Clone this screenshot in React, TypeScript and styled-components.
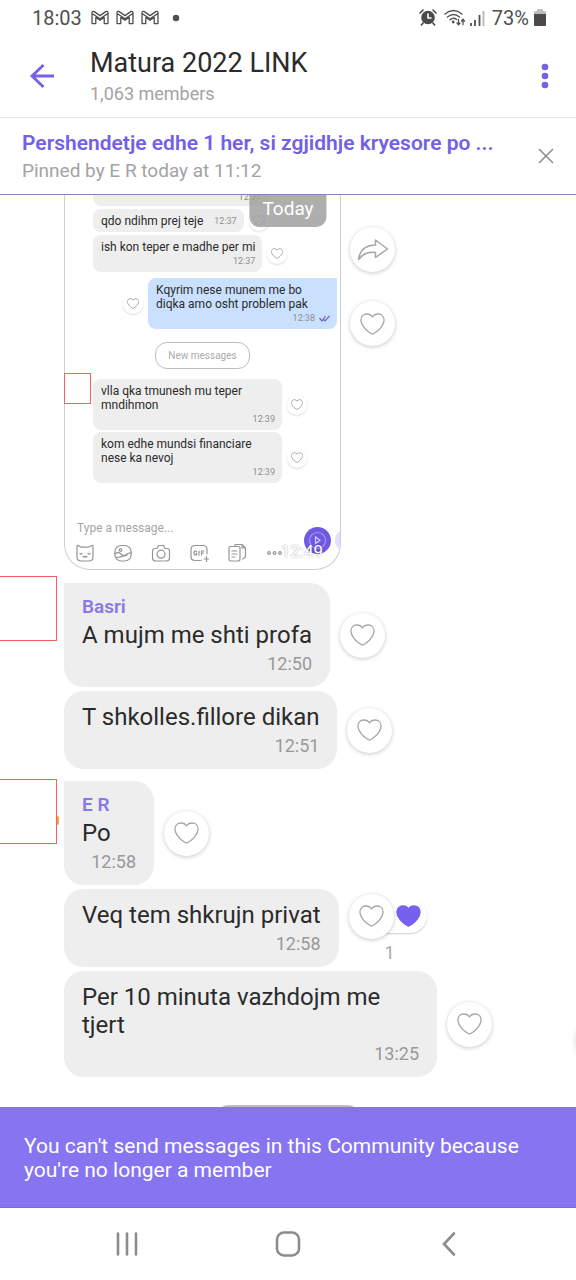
import React from "react";
import styled, { createGlobalStyle } from "styled-components";

const GlobalStyle = createGlobalStyle`
  *, *::before, *::after { box-sizing: border-box; }
  body { margin: 0; background: #fff; font-family: Roboto, "Liberation Sans", sans-serif; color: #2b2b2b; }
  button { font: inherit; color: inherit; border: 0; padding: 0; background: none; cursor: pointer; }
  svg { display: block; flex: none; }
  h1, p { margin: 0; font-weight: 400; }
`;

const Page = styled.div`
  display: flex;
  flex-direction: column;
  height: 100vh;
  overflow: hidden;
`;

const StatusBar = styled.div`
  display: flex;
  justify-content: space-between;
  align-items: center;
  height: 35px;
  padding: 0 30px 0 32px;
  font-size: 20px;
  color: #505050;
`;

const StatusGroup = styled.div<{ $gap: number }>`
  display: flex;
  align-items: center;
  gap: ${(p) => p.$gap}px;
`;

const Header = styled.header`
  display: flex;
  align-items: center;
  height: 83px;
  padding: 0 24px 0 28px;
  border-bottom: 1px solid #e6e6e6;
`;

const IconButton = styled.button`
  display: flex;
  align-items: center;
  justify-content: center;
`;

const HeaderText = styled.div`
  flex: 1;
  padding-left: 34px;
`;

const Title = styled.h1`
  font-size: 27px;
  line-height: 34px;
`;

const Muted = styled.p<{ $size: number }>`
  margin-top: 2px;
  font-size: ${(p) => p.$size}px;
  line-height: 24px;
  color: #a3a3a3;
`;

const PinnedBar = styled.section`
  display: flex;
  align-items: center;
  justify-content: space-between;
  height: 77px;
  padding: 0 22px;
  border-bottom: 1px solid #8781bd;
`;

const PinnedTitle = styled.p`
  font-size: 21px;
  line-height: 28px;
  font-weight: 600;
  color: #7360e4;
`;

const Chat = styled.main`
  position: relative;
  flex: 1;
  min-height: 0;
  overflow: hidden;
`;

const DateBadge = styled.div`
  position: absolute;
  top: 0;
  left: 50%;
  transform: translateX(-50%);
  padding: 0 13px 4px;
  border-radius: 0 0 10px 10px;
  background: rgba(160, 160, 160, 0.85);
  color: #fff;
  font-size: 19px;
  line-height: 28px;
`;

const PhotoRow = styled.div`
  display: flex;
  align-items: flex-start;
  gap: 9px;
  padding-left: 64px;
`;

const PhotoFrame = styled.div`
  position: relative;
`;

const Photo = styled.div`
  position: relative;
  display: flex;
  flex-direction: column;
  align-items: flex-start;
  width: 277px;
  height: 375px;
  border: 1px solid #cfcfcf;
  border-top: 0;
  border-radius: 0 0 26px 26px;
  overflow: hidden;
`;

const MiniRow = styled.div<{ $top: number; $end?: boolean }>`
  display: flex;
  align-items: center;
  gap: 5px;
  margin-top: ${(p) => p.$top}px;
  padding: 0 3px 0 28px;
  align-self: ${(p) => (p.$end ? "flex-end" : "flex-start")};
`;

const MiniBubble = styled.div<{ $own?: boolean; $width?: number; $inline?: boolean }>`
  display: flex;
  flex-direction: ${(p) => (p.$inline ? "row" : "column")};
  align-items: ${(p) => (p.$inline ? "center" : "stretch")};
  gap: ${(p) => (p.$inline ? 11 : 0)}px;
  width: ${(p) => (p.$width ? `${p.$width}px` : "auto")};
  padding: 5px 7px 4px 8px;
  border-radius: ${(p) => (p.$own ? "8px 0 8px 8px" : "8px")};
  background: ${(p) => (p.$own ? "#c9e0fe" : "#eeeeee")};
  font-size: 12px;
  line-height: 14px;
`;

const CutBubble = styled.div`
  width: 175px;
  height: 11px;
  padding-right: 7px;
  border-radius: 0 0 8px 8px;
  background: #eeeeee;
`;

const MiniTime = styled.span<{ $lift?: boolean }>`
  display: flex;
  justify-content: flex-end;
  align-items: center;
  gap: 4px;
  margin-top: ${(p) => (p.$lift ? -5 : 0)}px;
  font-size: 9px;
  line-height: 14px;
  color: #8f8f8f;
`;

const NewMessages = styled.div`
  align-self: center;
  margin-top: 13px;
  padding: 0 12px;
  border: 1px solid #bdbdbd;
  border-radius: 12px;
  font-size: 10px;
  line-height: 25px;
  color: #ababab;
`;

const AvatarMark = styled.div`
  position: absolute;
  left: 0;
  top: 178px;
  width: 27px;
  height: 31px;
  border: 1px solid #f4605f;
  background: #fff;
`;

const Composer = styled.input`
  width: 160px;
  margin: 37px 0 0 12px;
  padding: 0;
  border: 0;
  outline: 0;
  background: none;
  font: 12px/16px Roboto, "Liberation Sans", sans-serif;
  &::placeholder { color: #a5a5a5; opacity: 1; }
`;

const Tools = styled.div`
  display: flex;
  gap: 18px;
  margin: 7px 0 0 10px;
`;

const VoiceButton = styled.div`
  position: absolute;
  right: 9px;
  bottom: 15px;
`;

const PhotoEdge = styled.div`
  position: absolute;
  right: -18px;
  bottom: 17px;
  width: 23px;
  height: 23px;
  border-radius: 50%;
  background: #e3dffa;
`;

const PhotoTime = styled.span`
  position: absolute;
  right: 17px;
  bottom: 7px;
  font-size: 17px;
  line-height: 22px;
  color: #fff;
  text-shadow: 0 0 2px rgba(0, 0, 0, 0.4);
`;

const SideActions = styled.div`
  display: flex;
  flex-direction: column;
  gap: 29px;
  padding-top: 32px;
`;

const RoundButton = styled.button<{ $small?: boolean }>`
  position: relative;
  display: flex;
  align-items: center;
  justify-content: center;
  flex: none;
  width: ${(p) => (p.$small ? 20 : 45)}px;
  height: ${(p) => (p.$small ? 20 : 45)}px;
  border-radius: 50%;
  background: #fff;
  box-shadow: ${(p) => (p.$small ? "0 1px 2px rgba(0,0,0,.14)" : "0 1px 4px rgba(0,0,0,.22)")};
`;

const Group = styled.section<{ $gapTop: number; $inset: number }>`
  display: flex;
  align-items: flex-start;
  gap: 7px;
  margin-top: ${(p) => p.$gapTop}px;
  > ul { padding-top: ${(p) => p.$inset}px; }
`;

const Avatar = styled.div`
  position: relative;
  flex: none;
  width: 57px;
  height: 65px;
  border: 1px solid #f4605f;
  border-left: 0;
  background: #fff;
`;

const AvatarDot = styled.span`
  position: absolute;
  right: -3px;
  top: 36px;
  width: 2px;
  height: 9px;
  border-radius: 0 2px 2px 0;
  background: #f7a233;
`;

const Messages = styled.ul`
  display: flex;
  flex-direction: column;
  gap: 4px;
  flex: 1;
  margin: 0;
  padding: 0;
  list-style: none;
`;

const MessageRow = styled.li`
  display: flex;
  align-items: center;
  gap: 10px;
`;

const Bubble = styled.article<{ $first?: boolean }>`
  max-width: 373px;
  padding: 12px 18px 11px;
  border-radius: ${(p) => (p.$first ? "0 20px 20px 20px" : "20px")};
  background: #eeeeee;
  font-size: 24px;
  line-height: 28px;
`;

const Sender = styled.div`
  margin-bottom: 2px;
  font-size: 19px;
  line-height: 24px;
  font-weight: 600;
  color: #8b78e6;
`;

const Time = styled.div`
  min-width: 54px;
  margin-top: 3px;
  font-size: 18px;
  line-height: 24px;
  text-align: right;
  color: #999;
`;

const Reactions = styled.div`
  display: flex;
  flex-direction: column;
`;

const ReactionRow = styled.div`
  display: flex;
  align-items: center;
`;

const ReactionPill = styled.div`
  display: flex;
  align-items: center;
  justify-content: flex-end;
  width: 56px;
  height: 34px;
  margin-left: -23px;
  padding-right: 6px;
  border-radius: 17px;
  background: #fff;
  box-shadow: 0 1px 2px rgba(0, 0, 0, 0.2);
`;

const ReactionHeart = styled(RoundButton)`
  z-index: 1;
`;

const ReactionCount = styled.span`
  padding: 4px 0 0 4px;
  font-size: 18px;
  line-height: 20px;
  color: #a8a8a8;
  text-align: center;
`;

const NextDate = styled.div`
  width: 146px;
  height: 32px;
  margin: 28px auto 0;
  border-radius: 14px;
  background: #bcbac6;
`;

const EdgeButton = styled.div`
  position: absolute;
  right: -46px;
  bottom: 44px;
  width: 46px;
  height: 46px;
  border-radius: 50%;
  box-shadow: 0 1px 6px rgba(0, 0, 0, 0.16);
`;

const Banner = styled.footer`
  padding: 27px 24px 25px;
  border-bottom: 1px solid #7b6bd6;
  background: #8674f1;
  color: #fff;
  font-size: 21px;
  line-height: 24px;
`;

const BannerText = styled.p`
  max-width: 520px;
`;

const NavBar = styled.nav`
  display: flex;
  justify-content: space-around;
  align-items: center;
  height: 72px;
  padding: 0 47px;
`;

const Heart = ({ small = false, filled = false }: { small?: boolean; filled?: boolean }) => (
  <svg
    width={small ? 12 : 25}
    height={small ? 11 : 22}
    viewBox="0 0 25 22"
    fill={filled ? "#7660ee" : "none"}
    stroke={filled ? "#7660ee" : "#a6a6a6"}
    strokeWidth={small ? 2 : 1.3}
    strokeLinejoin="round"
  >
    <path d="M12.500 21.200C11 20.700 6.300 17.700 3.800 14.200 1.700 11.300.9 9.300.9 7.100.9 3.400 3.500 1 6.800 1 9.300 1 11.500 2.200 12.500 4 13.500 2.200 15.700 1 18.200 1 21.500 1 24.100 3.400 24.100 7.100 24.100 9.300 23.300 11.300 21.200 14.200 18.700 17.700 14 20.700 12.500 21.200Z" />
  </svg>
);

const LikeButton = ({ small }: { small?: boolean }) => (
  <RoundButton $small={small} aria-label="Like">
    <Heart small={small} />
  </RoundButton>
);

const Mail = () => (
  <svg width="18" height="15" viewBox="0 0 19 16" fill="none" stroke="#505050" strokeWidth="1.4" strokeLinejoin="round">
    <path d="M1 14.500V3Q1 1 3 1.500L9.500 6 16 1.500Q18 1 18 3V14.500H14V8L9.500 11 5 8V14.500ZM1.500 4 9.500 9.500 17.500 4" />
  </svg>
);

const Alarm = () => (
  <svg width="18" height="17" viewBox="0 0 18 17" fill="none" stroke="#4a4a4a" strokeWidth="1.6" strokeLinecap="round">
    <circle cx="9" cy="8.500" r="6.800" fill="#4a4a4a" stroke="none" />
    <path d="M1 4 4 1M17 4l-3-3M4 14l-1.500 2M14 14l1.500 2" />
    <path d="M9 5v4h3" stroke="#fff" />
  </svg>
);

const Wifi = () => (
  <svg width="22" height="18" viewBox="0 0 22 18" fill="none" stroke="#505050" strokeWidth="1.4" strokeLinecap="round">
    <path d="M1 5Q9.500-2 18 5M3.500 8Q9.500 3 15.500 8M6 10.800Q9.500 8 12.500 10.500" />
    <circle cx="9.200" cy="13" r=".7" fill="#505050" />
    <path d="M14.500 10.500v5m-1.500-1.500 1.500 1.700L16 14M19 15.500v-5M17.500 12 19 10.300 20.500 12" strokeWidth="1.300" />
  </svg>
);

const Signal = () => (
  <svg width="15" height="16" viewBox="0 0 15 16" stroke="#505050" strokeWidth="1.8">
    <path d="M1 16v-3M5 16v-6M9.500 16V5" />
    <path d="M13.500 16V1" stroke="#b5b5b5" />
  </svg>
);

const Battery = () => (
  <svg width="12" height="17" viewBox="0 0 12 17">
    <path d="M0 5V3.500Q0 2 1.500 2H3V1Q3 0 4 0h4q1 0 1 1v1h1.500Q12 2 12 3.500V5Z" fill="#bdbdbd" />
    <path d="M0 5h12v11q0 1-1 1H1Q0 17 0 16Z" fill="#4a4a4a" />
  </svg>
);

const Seen = () => (
  <svg width="11" height="7" viewBox="0 0 11 7" fill="none" stroke="#6f62c9" strokeWidth="1.2">
    <path d="M.5 3 3 6 6.500 1M4.500 4.500 6 6 10.500 1" />
  </svg>
);

const toolIcons: { label: string; art: React.ReactNode }[] = [
  { label: "Stickers", art: <path d="M2 3.500Q2 1.500 4 3q1.500 1.300 3 1.200h6Q14.500 4 16 3q2-1.500 2 .5V14q0 4-4 4H6q-4 0-4-4ZM5 10.500q1 1 2 0M13 10.500q1 1 2 0M8 13.500q1 1 2 0 1 1 2 0" /> },
  { label: "Gallery", art: <><rect x="1.800" y="2.500" width="16.400" height="15.500" rx="6.500" /><circle cx="7.500" cy="7" r="1.300" /><path d="M2 11q3-3 6 0 3.500 3.500 6 .5 2-2 4-1.500M3 14.500q7-.5 11-3.500" /></> },
  { label: "Camera", art: <><path d="M1.500 8q0-2.500 2.500-2.500h2L7.500 2.500h5L14 5.500h2q2.500 0 2.500 2.500v7q0 3-3 3h-11q-3 0-3-3Z" /><circle cx="10" cy="11.200" r="4" /></> },
  { label: "GIF", art: <><path d="M12 17.500H6q-4 0-4-4v-7q0-4 4-4h8q4 0 4 4V11M15 16h5M17.500 13.500v5" /><path d="M7.500 8.500Q5 7.500 5 10t2.500 1.800V10M10 8v4M12.500 12V8H15M12.500 10h2" /></> },
  { label: "Files", art: <path d="M2 5q0-1.500 1.500-1.500h8Q13 3.500 13 5v11q0 2-2 2H4q-2 0-2-2ZM8 3V1.500h7l3.500 3.500v8q0 2-3 3M15 1.500V5h3.500M5 8h5M5 11h5M5 14h3" /> },
  { label: "More", art: <><circle cx="4" cy="10" r="1.300" /><circle cx="9.500" cy="10" r="1.300" /><circle cx="15" cy="10" r="1.300" /></> },
];

type Message = { text: string; time: string; sender?: string; reactions?: number };

const MessageItem = ({ text, time, sender, reactions }: Message) => (
  <MessageRow>
    <Bubble $first={Boolean(sender)}>
      {sender && <Sender>{sender}</Sender>}
      <p>{text}</p>
      <Time>{time}</Time>
    </Bubble>
    {reactions ? (
      <Reactions>
        <ReactionRow>
          <ReactionHeart aria-label="Like"><Heart /></ReactionHeart>
          <ReactionPill><Heart filled /></ReactionPill>
        </ReactionRow>
        <ReactionCount>{reactions}</ReactionCount>
      </Reactions>
    ) : (
      <LikeButton />
    )}
  </MessageRow>
);

const basriMessages: Message[] = [
  { sender: "Basri", text: "A mujm me shti profa", time: "12:50" },
  { text: "T shkolles.fillore dikan", time: "12:51" },
];

const erMessages: Message[] = [
  { sender: "E R", text: "Po", time: "12:58" },
  { text: "Veq tem shkrujn privat", time: "12:58", reactions: 1 },
  { text: "Per 10 minuta vazhdojm me tjert", time: "13:25" },
];

export default function App() {
  return (
    <Page>
      <GlobalStyle />
      <StatusBar>
        <StatusGroup $gap={9}>
          <span>18:03</span>
          <StatusGroup $gap={7}><Mail /><Mail /><Mail /></StatusGroup>
          <svg width="16" height="8" viewBox="0 0 16 8"><circle cx="8" cy="4" r="3.200" fill="#505050" /></svg>
        </StatusGroup>
        <StatusGroup $gap={7}>
          <Alarm />
          <StatusGroup $gap={4}><Wifi /><Signal /></StatusGroup>
          <StatusGroup $gap={5}><span>73%</span><Battery /></StatusGroup>
        </StatusGroup>
      </StatusBar>

      <Header>
        <IconButton aria-label="Back">
          <svg width="28" height="28" viewBox="0 0 28 28" fill="none" stroke="#7660e8" strokeWidth="2.800"><path d="M26 14H4M15.500 3 4 14l11.500 11" /></svg>
        </IconButton>
        <HeaderText>
          <Title>Matura 2022 LINK</Title>
          <Muted $size={18}>1,063 members</Muted>
        </HeaderText>
        <IconButton aria-label="More options">
          <svg width="14" height="28" viewBox="0 0 14 28" fill="#7660e8"><circle cx="7" cy="5" r="3.300" /><circle cx="7" cy="14" r="3.300" /><circle cx="7" cy="23" r="3.300" /></svg>
        </IconButton>
      </Header>

      <PinnedBar>
        <div>
          <PinnedTitle>Pershendetje edhe 1 her, si zgjidhje kryesore po ...</PinnedTitle>
          <Muted $size={19}>Pinned by E R today at 11:12</Muted>
        </div>
        <IconButton aria-label="Close pinned message">
          <svg width="16" height="16" viewBox="0 0 16 16" stroke="#8c8c8c" strokeWidth="1.500"><path d="m1 1 14 14M15 1 1 15" /></svg>
        </IconButton>
      </PinnedBar>

      <Chat>
        <PhotoRow>
          <PhotoFrame>
            <Photo>
              <MiniRow $top={0}>
                <CutBubble><MiniTime $lift>12:37</MiniTime></CutBubble>
              </MiniRow>
              <MiniRow $top={3}>
                <MiniBubble $inline>qdo ndihm prej teje<MiniTime>12:37</MiniTime></MiniBubble>
                <LikeButton small />
              </MiniRow>
              <MiniRow $top={3}>
                <MiniBubble>ish kon teper e madhe per mi<MiniTime>12:37</MiniTime></MiniBubble>
                <LikeButton small />
              </MiniRow>
              <MiniRow $top={6} $end>
                <LikeButton small />
                <MiniBubble $own $width={189}>Kqyrim nese munem me bo diqka amo osht problem pak<MiniTime>12:38<Seen /></MiniTime></MiniBubble>
              </MiniRow>
              <NewMessages>New messages</NewMessages>
              <MiniRow $top={10}>
                <MiniBubble $width={189}>vlla qka tmunesh mu teper mndihmon<MiniTime>12:39</MiniTime></MiniBubble>
                <LikeButton small />
              </MiniRow>
              <MiniRow $top={2}>
                <MiniBubble $width={189}>kom edhe mundsi financiare nese ka nevoj<MiniTime>12:39</MiniTime></MiniBubble>
                <LikeButton small />
              </MiniRow>
              <Composer aria-label="Message" placeholder="Type a message..." />
              <Tools>
                {toolIcons.map((t) => (
                  <IconButton key={t.label} aria-label={t.label}>
                    <svg width="20" height="20" viewBox="0 0 20 20" fill="none" stroke="#969696" strokeWidth="1.200" strokeLinecap="round" strokeLinejoin="round">{t.art}</svg>
                  </IconButton>
                ))}
              </Tools>
              <VoiceButton>
                <svg width="27" height="27" viewBox="0 0 27 27" fill="none" stroke="#a697f3" strokeWidth="1.200"><circle cx="13.500" cy="13.500" r="13.500" fill="#7059e0" stroke="none" /><circle cx="13.500" cy="13.500" r="8" /><path d="M11.500 10v6.500l4.500-3.200Z" stroke="#d5ceff" /></svg>
              </VoiceButton>
              <PhotoEdge />
              <PhotoTime>12:49</PhotoTime>
            </Photo>
            <AvatarMark />
          </PhotoFrame>
          <SideActions>
            <RoundButton aria-label="Forward">
              <svg width="32" height="24" viewBox="0 0 32 24" fill="none" stroke="#a6a6a6" strokeWidth="1.500" strokeLinejoin="round"><path d="M1.500 21.500C3 12 9 7 18.500 7V2L30.500 11 18.500 19.500V14.500C11 13.500 6 15.500 1.500 21.500Z" /></svg>
            </RoundButton>
            <LikeButton />
          </SideActions>
        </PhotoRow>
        <DateBadge>Today</DateBadge>

        <Group $gapTop={6} $inset={7}>
          <Avatar />
          <Messages>{basriMessages.map((m) => <MessageItem key={m.text} {...m} />)}</Messages>
        </Group>
        <Group $gapTop={10} $inset={2}>
          <Avatar><AvatarDot /></Avatar>
          <Messages>{erMessages.map((m) => <MessageItem key={m.text} {...m} />)}</Messages>
        </Group>
        <NextDate />
        <EdgeButton />
      </Chat>

      <Banner>
        <BannerText>You can't send messages in this Community because you're no longer a member</BannerText>
      </Banner>

      <NavBar>
        <IconButton aria-label="Recent apps">
          <svg width="26" height="26" viewBox="0 0 26 26" stroke="#8c8c8c" strokeWidth="2.600" strokeLinecap="round"><path d="M4 2.500v21M13 2.500v21M22 2.500v21" /></svg>
        </IconButton>
        <IconButton aria-label="Home">
          <svg width="26" height="26" viewBox="0 0 26 26" fill="none" stroke="#8c8c8c" strokeWidth="2.600"><rect x="2" y="1.500" width="22" height="23" rx="7" /></svg>
        </IconButton>
        <IconButton aria-label="Go back">
          <svg width="26" height="26" viewBox="0 0 26 26" fill="none" stroke="#8c8c8c" strokeWidth="2.600" strokeLinecap="round"><path d="M18 2.500 8 13 18 23.500" /></svg>
        </IconButton>
      </NavBar>
    </Page>
  );
}
